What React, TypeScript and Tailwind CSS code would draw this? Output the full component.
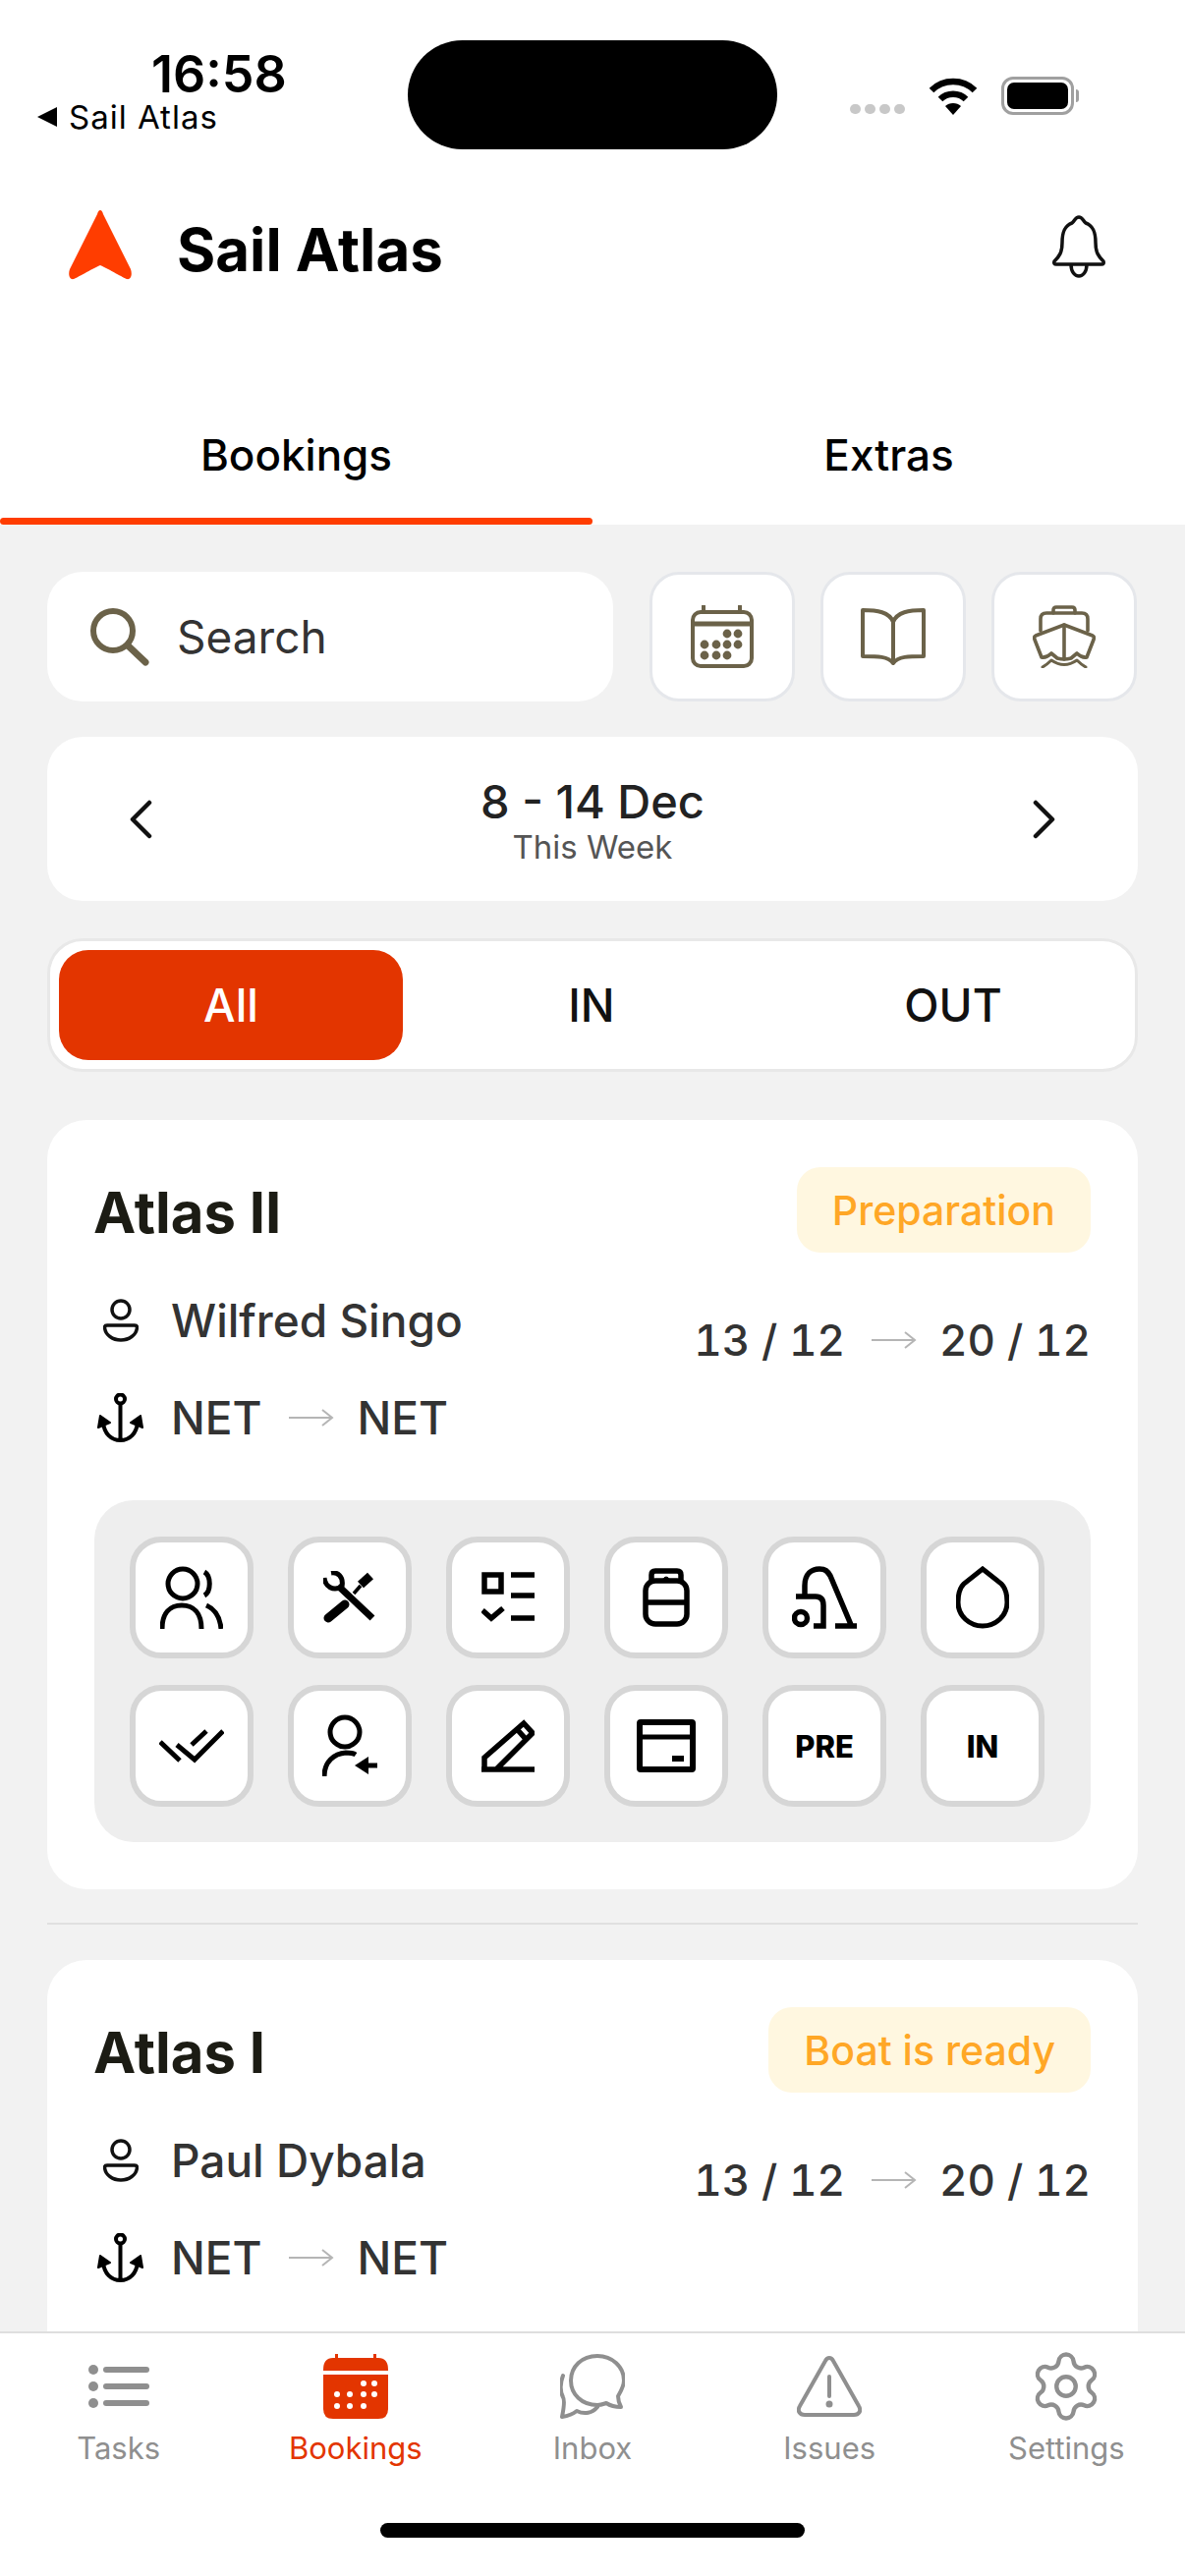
import { Settings } from 'lucide-react';
import type { ReactNode } from 'react';

const OLIVE = '#6b6249';

function Dots({ rows, r, fill }: { rows: [number, number[]][]; r: number; fill: string }): ReactNode {
  return (
    <>
      {rows.flatMap(([y, xs]) => xs.map((x) => <circle key={`${x}-${y}`} cx={x} cy={y} r={r} fill={fill} />))}
    </>
  );
}

function Logo(): ReactNode {
  return (
    <svg width="66" height="72" viewBox="0 0 66 72" fill="#ff3d00">
      <path d="M33 0C34.5 0 35.5 2 36 4L64 60C66 66 64 71 60 70C57 69 42 60 33 56C24 60 9 69 6 70C2 71 0 66 2 60L30 4C30.5 2 31.5 0 33 0Z" />
    </svg>
  );
}

function Bell(): ReactNode {
  return (
    <svg width="56" height="64" viewBox="0 0 56 64" fill="none" stroke="#111" strokeWidth="3.5" strokeLinejoin="round">
      <path d="M28 2C24 2 24 6 21 8C13 11 11 18 11 28C11 38 8 42 3 47Q2 50 5 50H51Q54 50 53 47C48 42 45 38 45 28C45 18 43 11 35 8C32 6 32 2 28 2Z" />
      <path d="M20 50C20 58 24 62 28 62C32 62 36 58 36 50" />
    </svg>
  );
}

function SearchIcon(): ReactNode {
  return (
    <svg width="62" height="60" viewBox="0 0 62 60" fill="none" stroke={OLIVE} strokeWidth="6" strokeLinecap="round">
      <circle cx="25" cy="24" r="20" />
      <path d="M40 39L58 56" strokeWidth="7" />
    </svg>
  );
}

function CalendarIcon(): ReactNode {
  return (
    <svg width="64" height="64" viewBox="0 0 64 64" fill="none" stroke={OLIVE} strokeWidth="4">
      <rect x="2" y="7" width="60" height="55" rx="8" />
      <path d="M2 19H62" strokeWidth="5" />
      <path d="M13 1V7M50 1V7" strokeLinecap="round" />
      <Dots r={2.4} fill={OLIVE} rows={[[29, [37, 48]], [40, [14, 26, 37, 48]], [51, [14, 26, 37]]]} />
    </svg>
  );
}

function BookIcon(): ReactNode {
  return (
    <svg width="68" height="60" viewBox="0 0 68 60" fill="none" stroke={OLIVE} strokeWidth="4" strokeLinejoin="round">
      <path d="M3 3C18 3 30 5 34 15C38 5 50 3 65 3V50C50 50 39 50 34 57C29 50 18 50 3 50Z" />
      <path d="M34 15V57" />
    </svg>
  );
}

function ShipIcon(): ReactNode {
  return (
    <svg width="64" height="64" viewBox="0 0 64 64" fill="none" stroke={OLIVE} strokeWidth="3.6" strokeLinejoin="round" strokeLinecap="round">
      <path d="M21 8V5Q21 2 24 2H40Q43 2 43 5V8" />
      <path d="M8 26V14Q8 8 14 8H50Q56 8 56 14V26" />
      <path d="M32 20L61 31Q63 32 62 35L55 53Q50 54 45 49L39 54Q32 56 25 54L19 49Q14 54 9 53L2 35Q1 32 3 31Z" />
      <path d="M32 20V55" />
      <path d="M10 63Q15 60 19 56Q32 65 45 56Q49 60 54 63" strokeWidth="3" />
    </svg>
  );
}

function Chevron({ flip }: { flip?: boolean }): ReactNode {
  return (
    <svg width="24" height="40" viewBox="0 0 24 40" fill="none" stroke="#111" strokeWidth="4.5" strokeLinecap="round" strokeLinejoin="round">
      <path d={flip ? 'M4 3L21 20L4 37' : 'M20 3L3 20L20 37'} />
    </svg>
  );
}

function ThinArrow(): ReactNode {
  return (
    <svg width="46" height="20" viewBox="0 0 46 20" fill="none" stroke="#b5b5b5" strokeWidth="2">
      <path d="M0 10H44M34 2L44 10L34 18" />
    </svg>
  );
}

function PersonIcon(): ReactNode {
  return (
    <svg width="36" height="44" viewBox="0 0 36 44" fill="none" stroke="#111" strokeWidth="3.5">
      <circle cx="18" cy="11" r="9" />
      <path d="M4 27H32Q34.5 27 34.5 29C34 37 26 42 18 42C10 42 2 37 1.5 29Q1.5 27 4 27Z" />
    </svg>
  );
}

function AnchorIcon(): ReactNode {
  return (
    <svg width="47" height="51" viewBox="0 0 47 51" fill="none" stroke="#000" strokeWidth="4">
      <circle cx="23.5" cy="6" r="4.5" />
      <path d="M23.5 10V48M6 30C7 41 14 48 23.5 48C33 48 40 41 41 30" />
      <path d="M1 35L3 23L13 30Z M46 35L44 23L34 30Z" fill="#000" strokeLinejoin="round" strokeWidth="2" />
    </svg>
  );
}

// Twelve status icons, black and roughly 60px, as in the boat action grid
const ACTIONS: ReactNode[] = [
  <svg key="crew" width="64" height="64" viewBox="0 0 64 64" fill="none" stroke="#000" strokeWidth="5">
    <ellipse cx="23" cy="18" rx="15" ry="15" />
    <path d="M2 64C2 48 10 40 22 40C34 40 42 48 42 64M45 6C52 10 52 26 45 30M47 40C56 44 61 52 62 64" />
  </svg>,
  <svg key="tools" width="54" height="54" viewBox="0 0 54 54" fill="none" stroke="#000" strokeWidth="6">
    <path d="M15 15L50 48" strokeWidth="7" />
    <path d="M1 7C2 16 10 21 19 16M8 2C14 1 21 5 19 16" strokeWidth="5" />
    <path d="M5 48L22 34" strokeWidth="9" strokeLinecap="round" />
    <path d="M31 23L38 15" strokeWidth="3.5" />
    <path d="M38 14L48 5" strokeWidth="9" />
  </svg>,
  <svg key="checklist" width="54" height="52" viewBox="0 0 54 52" fill="none" stroke="#000" strokeWidth="5.5">
    <rect x="3" y="3" width="17" height="17" />
    <path d="M30 3H54M30 24H54M30 47H54" />
    <path d="M1 39L10 47L22 37" />
  </svg>,
  <svg key="bag" width="48" height="60" viewBox="0 0 48 60" fill="none" stroke="#000" strokeWidth="5.5">
    <rect x="3" y="13" width="42" height="44" rx="10" />
    <path d="M9 13V7Q9 3 13 3H35Q39 3 39 7V13M3 35H45" />
    <path d="M20 12Q24 6 28 12Z" fill="#000" strokeWidth="1" />
  </svg>,
  <svg key="vacuum" width="66" height="64" viewBox="0 0 66 64" fill="none" stroke="#000" strokeWidth="5.5">
    <path d="M13 32V20C13 8 20 3 28 3C34 3 36 5 39 10L61 62M44 61H66" />
    <path d="M4 31H24C30 31 32 35 32 40V61H22" />
    <circle cx="9" cy="53" r="6.5" />
  </svg>,
  <svg key="water" width="54" height="64" viewBox="0 0 54 64" fill="none" stroke="#000" strokeWidth="5">
    <path d="M27 3L46 18C50 22 52 30 52 37C52 51 40 61 27 61C14 61 2 51 2 37C2 30 4 22 8 18Z" />
  </svg>,
  <svg key="done" width="66" height="36" viewBox="0 0 66 36" fill="none" stroke="#000" strokeWidth="5">
    <path d="M1 14L21 33M18 17L36 32L65 3M33 17L48 3" />
  </svg>,
  <svg key="checkin" width="56" height="64" viewBox="0 0 56 64" fill="none" stroke="#000" strokeWidth="5">
    <circle cx="23" cy="18" r="15" />
    <path d="M2 63C2 48 12 40 24 39C28 39 31 39 34 41" />
    <path d="M33 52L47 43V61Z" fill="#000" stroke="none" />
    <path d="M46 52H56" />
  </svg>,
  <svg key="sign" width="54" height="54" viewBox="0 0 54 54" fill="none" stroke="#000" strokeWidth="5.5">
    <path d="M0 51H54M3 51V39L43 4L52 14L15 51M36 10L45 20" />
  </svg>,
  <svg key="card" width="60" height="54" viewBox="0 0 60 54" fill="none" stroke="#000" strokeWidth="6">
    <rect x="3" y="3" width="54" height="48" rx="1" />
    <path d="M3 18H57" strokeWidth="5" />
    <path d="M36 40H48" strokeWidth="6" />
  </svg>,
  <span key="pre" className="pt-[2px]">PRE</span>,
  <span key="in" className="pt-[2px]">IN</span>,
];

type Booking = { boat: string; status: string; skipper: string; actions: boolean };

const BOOKINGS: Booking[] = [
  { boat: 'Atlas II', status: 'Preparation', skipper: 'Wilfred Singo', actions: true },
  // the second card's grid sits behind the nav, so only its panel is kept
  { boat: 'Atlas I', status: 'Boat is ready', skipper: 'Paul Dybala', actions: false },
];

function BookingCard({ booking }: { booking: Booking }): ReactNode {
  return (
    <section className="rounded-[40px] bg-white px-[48px] pt-[48px] pb-[48px]">
      <header className="flex h-[87px] items-center justify-between">
        <h2 className="-ml-[1px] pt-[4px] text-[58px] leading-none font-bold text-[#1c1c14]">{booking.boat}</h2>
        <span className="flex h-[87px] items-center rounded-[24px] bg-[#fff7e0] px-[36px] pt-[2px] text-[41px] font-medium text-[#ffa726]">
          {booking.status}
        </span>
      </header>
      <div className="mt-[44px] flex justify-between">
        <div className="flex flex-col gap-[49px] text-[46px] font-medium text-[#333]">
          <div className="flex h-[50px] items-center">
            <span className="flex w-[78px] justify-center pr-[25px]">
              <PersonIcon />
            </span>
            {booking.skipper}
          </div>
          <div className="flex h-[50px] items-center">
            <span className="flex w-[78px] justify-center pr-[25px]">
              <AnchorIcon />
            </span>
            NET
            <span className="mr-[24px] ml-[27px]">
              <ThinArrow />
            </span>
            NET
          </div>
        </div>
        <div className="mt-[20px] flex h-[50px] items-center text-[44px] font-medium text-[#333] tabular-nums">
          13 / 12
          <span className="mr-[23px] ml-[27px]">
            <ThinArrow />
          </span>
          20 / 12
        </div>
      </div>
      <div className="mt-[59px] grid min-h-[348px] w-full grid-cols-[repeat(6,126px)] content-start gap-x-[35px] gap-y-[27px] rounded-[40px] bg-[#eeeeee] pt-[37px] pr-[36px] pb-[36px] pl-[36px]">
        {booking.actions &&
          ACTIONS.map((action, i) => (
            <div
              key={i}
              className="flex h-[124px] w-[126px] items-center justify-center rounded-[32px] border-[6px] border-[#d6d6d6] bg-white text-[31px] font-extrabold text-black"
            >
              {action}
            </div>
          ))}
      </div>
    </section>
  );
}

function NavItem({ label, active, children }: { label: string; active?: boolean; children: ReactNode }): ReactNode {
  return (
    <div className={`flex flex-col items-center ${active ? 'text-[#e33500]' : 'text-[#8f8f8f]'}`}>
      <div className="flex h-[70px] items-center justify-center">{children}</div>
      <span className="mt-[10px] text-[31px] leading-[36px]">{label}</span>
    </div>
  );
}

export default function App(): ReactNode {
  return (
    <div className="flex h-[2622px] w-[1206px] flex-col overflow-hidden bg-[#f2f2f2] font-[Inter,'Liberation_Sans',sans-serif]">
      <div className="bg-white">
        {/* status bar */}
        <div className="flex h-[179px] items-start pt-[41px]">
          <div className="w-[415px] pt-[5px] pl-[38px] text-black">
            <div className="pl-[116px] text-[52px] leading-[60px] font-semibold">16:58</div>
            <div className="mt-[-7px] flex items-center gap-[12px] text-[33px] leading-[40px] tracking-[1px]">
              <span className="h-0 w-0 border-y-[10px] border-r-[20px] border-y-transparent border-r-black" />
              Sail Atlas
            </div>
          </div>
          <div className="h-[111px] w-[376px] rounded-full bg-black" />
          <div className="flex items-end pt-[37px] pl-[74px]">
            <div className="mb-[1px] flex gap-[4px]">
              <span className="h-[10px] w-[11px] rounded-full bg-[#c8c8c8]" />
              <span className="h-[10px] w-[11px] rounded-full bg-[#c8c8c8]" />
              <span className="h-[10px] w-[11px] rounded-full bg-[#c8c8c8]" />
              <span className="h-[10px] w-[11px] rounded-full bg-[#c8c8c8]" />
            </div>
            <svg className="ml-[24px]" width="50" height="38" viewBox="0 0 50 38" fill="none" stroke="#000" strokeWidth="6.5">
              <path d="M3 13C15 1 35 1 47 13M12 22C19 15 31 15 38 22" />
              <path d="M25 38L17 29C21 25 29 25 33 29Z" fill="#000" stroke="none" />
            </svg>
            <div className="ml-[24px] flex items-center">
              <div className="h-[39px] w-[74px] rounded-[12px] border-[3px] border-[#a0a0a0] p-[3px]">
                <div className="h-full w-full rounded-[7px] bg-black" />
              </div>
              <span className="ml-[2px] h-[13px] w-[3px] rounded-r-full bg-[#a0a0a0]" />
            </div>
          </div>
        </div>
        {/* app header */}
        <div className="flex h-[150px] items-center justify-between pr-[80px] pl-[69px]">
          <div className="flex items-center gap-[45px]">
            <span className="mb-[8px]">
              <Logo />
            </span>
            <span className="text-[60px] font-bold text-black">Sail Atlas</span>
          </div>
          <span className="mb-[6px]">
            <Bell />
          </span>
        </div>
        {/* tabs */}
        <div className="grid h-[205px] grid-cols-2 text-[44px] font-medium text-black">
          <div className="flex flex-col items-center justify-end">
            <span className="pb-[31px]">Bookings</span>
            <div className="h-[7px] w-full rounded-full bg-[#ff3d00]" />
          </div>
          <div className="flex flex-col items-center justify-end">
            <span className="pb-[38px]">Extras</span>
          </div>
        </div>
      </div>

      <main className="min-h-0 flex-1 overflow-hidden px-[48px] pt-[48px]">
        <div className="flex gap-[26px]">
          <div className="flex h-[132px] w-[576px] items-center gap-[28px] rounded-[36px] bg-white pl-[42px] text-[46px] text-[#333]">
            <SearchIcon />
            Search
          </div>
          <div className="ml-[11px] flex h-[132px] w-[148px] items-center justify-center rounded-[30px] border-[3px] border-[#e5e7eb] bg-white">
            <CalendarIcon />
          </div>
          <div className="flex h-[132px] w-[148px] items-center justify-center rounded-[30px] border-[3px] border-[#e5e7eb] bg-white">
            <BookIcon />
          </div>
          <div className="flex h-[132px] w-[148px] items-center justify-center rounded-[30px] border-[3px] border-[#e5e7eb] bg-white">
            <ShipIcon />
          </div>
        </div>

        <div className="mt-[36px] flex h-[167px] items-center justify-between rounded-[36px] bg-white px-[84px]">
          <Chevron />
          <div className="flex flex-col items-center pt-[4px]">
            <span className="text-[47px] leading-[52px] font-medium text-[#222]">8 - 14 Dec</span>
            <span className="text-[33px] leading-[40px] text-[#555]">This Week</span>
          </div>
          <Chevron flip />
        </div>

        <div className="mt-[38px] grid h-[136px] grid-cols-[350px_384px_352px] items-center rounded-[36px] border-[3px] border-[#e8e8e8] bg-white px-[9px] text-[46px] font-medium text-[#111]">
          <div className="flex h-[112px] items-center justify-center rounded-[30px] bg-[#e33500] text-white">All</div>
          <div className="text-center">IN</div>
          <div className="text-center">OUT</div>
        </div>

        <div className="mt-[49px]">
          <BookingCard booking={BOOKINGS[0]} />
        </div>
        <div className="mt-[34px] h-[2px] bg-[#e0e0e0]" />
        <div className="mt-[36px]">
          <BookingCard booking={BOOKINGS[1]} />
        </div>
      </main>

      <nav className="h-[249px] shrink-0 border-t-2 border-[#dedede] bg-white">
        <div className="grid grid-cols-5 pt-[19px]">
          <NavItem label="Tasks">
            <svg width="62" height="44" viewBox="0 0 62 44" fill="#8f8f8f">
              <circle cx="5" cy="5" r="5" />
              <circle cx="5" cy="22" r="5" />
              <circle cx="5" cy="39" r="5" />
              <rect x="15" y="2" width="47" height="6" rx="3" />
              <rect x="15" y="19" width="47" height="6" rx="3" />
              <rect x="15" y="36" width="47" height="6" rx="3" />
            </svg>
          </NavItem>
          <NavItem label="Bookings" active>
            <svg width="66" height="66" viewBox="0 0 66 66" fill="#e33500">
              <path d="M0 16Q0 4 10 4H12V0H15V4H51V0H54V4H56Q66 4 66 16V17H0Z" />
              <path d="M0 21H66V56Q66 66 56 66H10Q0 66 0 56Z" />
              <Dots r={3} fill="#fff" rows={[[30, [41, 52]], [41, [14, 27, 41, 52]], [53, [14, 27, 41]]]} />
            </svg>
          </NavItem>
          <NavItem label="Inbox">
            <svg width="66" height="66" viewBox="0 0 66 66" fill="none" stroke="#8f8f8f" strokeWidth="4" strokeLinejoin="round" strokeLinecap="round">
              <path d="M38 2C22 2 11 13 11 27C11 41 22 52 38 52C42 52 44 51 47 50C50 52 55 54 62 54C60 50 59 47 59 43C62 38 65 33 65 27C65 13 53 2 38 2Z" />
              <path d="M3 22C0 30 0 38 3 44C5 47 4 54 2 64C8 63 12 62 17 58C25 62 33 60 38 54" />
            </svg>
          </NavItem>
          <NavItem label="Issues">
            <svg width="66" height="62" viewBox="0 0 66 62" fill="none" stroke="#8f8f8f" strokeWidth="4" strokeLinejoin="round" strokeLinecap="round">
              <path d="M33 2C31 2 30 3 29 5L3 51C0 56 3 60 8 60H58C63 60 66 56 63 51L37 5C36 3 35 2 33 2Z" />
              <path d="M33 21V41" />
              <circle cx="33" cy="49" r="1.5" fill="#8f8f8f" />
            </svg>
          </NavItem>
          <NavItem label="Settings">
            <Settings size={78} strokeWidth={1.35} color="#8f8f8f" />
          </NavItem>
        </div>
        <div className="mx-auto mt-[58px] h-[15px] w-[432px] rounded-full bg-black" />
      </nav>
    </div>
  );
}
